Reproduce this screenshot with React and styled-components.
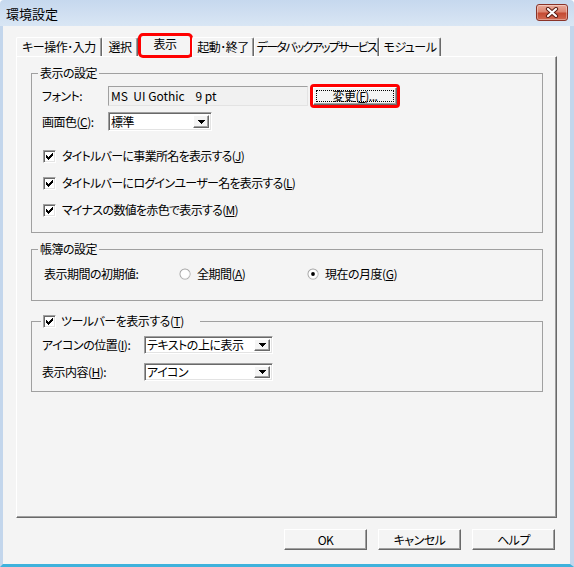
import React from "react";
import styled, { createGlobalStyle, css } from "styled-components";

const FONT = `"Noto Sans CJK JP", "Noto Sans", sans-serif`;
const FACE = "#f4f4f4";

const GlobalStyle = createGlobalStyle`
  html, body { margin: 0; padding: 0; background: #ffffff; }
  body { font-family: ${FONT}; font-size: 12px; color: #000; }
  * { box-sizing: border-box; }
`;

const Window = styled.div`
  width: 574px;
  height: 567px;
  display: flex;
  flex-direction: column;
  font-feature-settings: "palt";
  letter-spacing: -0.5px;
  line-height: 1;
`;

const TitleBar = styled.div`
  height: 26px;
  flex: none;
  display: flex;
  align-items: center;
  justify-content: space-between;
  padding: 0 6px;
  background: linear-gradient(to bottom, #c6d8ee, #d9e6f4);
  border-radius: 4px 4px 0 0;
`;

const Title = styled.div`
  font-size: 13px;
  letter-spacing: 0;
  color: #000;
`;

const CloseButton = styled.div`
  width: 32px;
  height: 17px;
  margin-top: -1px;
  border-radius: 3px;
  border: 1px solid #8a3328;
  background: linear-gradient(to bottom, #e9ab9c 0%, #dc8672 45%, #c44a33 55%, #d26a52 100%);
  box-shadow: inset 0 0 0 1px rgba(255, 255, 255, 0.35);
  display: flex;
  align-items: center;
  justify-content: center;
`;

const Client = styled.div`
  flex: 1;
  display: flex;
  flex-direction: column;
  background: ${FACE};
  border-left: 3px solid #c3d6ec;
  border-right: 4px solid #c3d6ec;
  border-bottom: 3px solid #3fb2dc;
  padding: 8px 13px 0 13px;
`;

const TabStrip = styled.div`
  display: flex;
  align-items: flex-end;
  height: 23px;
  margin-bottom: -1px;
  position: relative;
  z-index: 1;
`;

const Tab = styled.div`
  width: ${(p) => p.$w}px;
  height: ${(p) => (p.$active ? 23 : 19)}px;
  margin-bottom: ${(p) => (p.$active ? 0 : 1)}px;
  padding-bottom: ${(p) => (p.$active ? 4 : 0)}px;
  display: flex;
  align-items: center;
  justify-content: center;
  white-space: nowrap;
  letter-spacing: ${(p) => p.$ls ?? -0.5}px;
  background: ${FACE};
  border-top: 1px solid #ffffff;
  border-left: 1px solid #ffffff;
  border-right: 1px solid #696969;
  box-shadow: inset -1px 0 #a0a0a0;
  border-radius: 2px 2px 0 0;
  position: relative;
  ${(p) =>
    p.$active &&
    css`
      &::after {
        content: "";
        position: absolute;
        left: -1px;
        right: -2px;
        top: -2px;
        bottom: -1px;
        border: 3px solid #ff0000;
        border-radius: 5px;
      }
    `}
`;

const Panel = styled.div`
  width: 541px;
  height: 462px;
  flex: none;
  background: ${FACE};
  border-top: 1px solid #ffffff;
  border-left: 1px solid #ffffff;
  border-right: 1px solid #696969;
  border-bottom: 1px solid #696969;
  box-shadow: inset -1px -1px #a0a0a0;
  padding: 9px 0 0 14px;
  display: flex;
  flex-direction: column;
`;

const Group = styled.fieldset`
  width: 512px;
  min-width: 0;
  margin: ${(p) => p.$mt || 0}px 0 0 0;
  padding: ${(p) => p.$pt}px 10px ${(p) => p.$pb}px 10px;
  border: 1px solid #a0a0a0;
`;

const Legend = styled.legend`
  height: 14px;
  line-height: 14px;
  padding: 0 ${(p) => p.$pr || 2}px 0 2px;
  margin-left: ${(p) => p.$ml}px;
  display: flex;
  align-items: center;
  gap: 5px;
  white-space: nowrap;
`;

const Body = styled.div`
  display: flex;
  flex-direction: column;
`;

const Row = styled.div`
  display: flex;
  align-items: center;
  height: ${(p) => p.$h}px;
  margin-top: ${(p) => p.$mt || 0}px;
  margin-left: ${(p) => p.$ml || 0}px;
  white-space: nowrap;
`;

const Label = styled.div`
  width: ${(p) => p.$w}px;
  flex: none;
  white-space: nowrap;
`;

const ReadonlyField = styled.div`
  width: 200px;
  height: 20px;
  flex: none;
  background: #f1f1f1;
  border: 1px solid;
  border-color: #a0a0a0 #e3e3e3 #e3e3e3 #a0a0a0;
  padding-left: 2px;
  display: flex;
  align-items: center;
  white-space: pre;
  letter-spacing: 0;
`;

const Highlight = styled.div`
  margin-left: 2px;
  border: 3px solid #ff0000;
  border-radius: 4px;
  display: flex;
`;

const PushButton = styled.div`
  width: ${(p) => p.$w}px;
  height: ${(p) => p.$h}px;
  flex: none;
  display: flex;
  align-items: center;
  justify-content: center;
  background: ${FACE};
  border-top: 1px solid #ffffff;
  border-left: 1px solid #ffffff;
  border-right: 1px solid #696969;
  border-bottom: 1px solid #696969;
  box-shadow: inset -1px -1px #a0a0a0;
  padding: ${(p) => (p.$focus ? "2px" : "0")};
`;

const FocusRect = styled.div`
  flex: 1;
  align-self: stretch;
  border: 1px dotted #000;
  display: flex;
  align-items: center;
  justify-content: center;
`;

const Combo = styled.div`
  width: ${(p) => p.$w}px;
  height: ${(p) => p.$h}px;
  flex: none;
  background: #ffffff;
  border: 1px solid;
  border-color: #a0a0a0 #ffffff #ffffff #a0a0a0;
  box-shadow: inset 1px 1px #696969, inset -1px -1px #e3e3e3;
  padding: 2px;
  display: flex;
`;

const ComboText = styled.div`
  flex: 1;
  display: flex;
  align-items: center;
  white-space: nowrap;
`;

const ComboArrow = styled.div`
  width: 16px;
  flex: none;
  background: ${FACE};
  border-top: 1px solid #ffffff;
  border-left: 1px solid #ffffff;
  border-right: 1px solid #696969;
  border-bottom: 1px solid #696969;
  box-shadow: inset -1px -1px #a0a0a0;
  display: flex;
  align-items: center;
  justify-content: center;
`;

const CheckBox = styled.span`
  width: 13px;
  height: 13px;
  flex: none;
  background: #ffffff;
  border: 1px solid;
  border-color: #a0a0a0 #ffffff #ffffff #a0a0a0;
  box-shadow: inset 1px 1px #696969, inset -1px -1px #e3e3e3;
  display: inline-flex;
  align-items: center;
  justify-content: center;
  margin-left: ${(p) => p.$ml || 0}px;
`;

const CheckLabel = styled.span`
  margin-left: ${(p) => p.$gap || 6}px;
  letter-spacing: -0.7px;
`;

const RadioOption = styled.div`
  width: ${(p) => p.$w || "auto"};
  flex: none;
  display: flex;
  align-items: center;
  gap: 6px;
`;

const ButtonRow = styled.div`
  display: flex;
  justify-content: flex-end;
  gap: 11px;
  margin-top: 11px;
  padding-right: 2px;
`;

const U = styled.span`
  text-decoration: underline;
  text-underline-offset: 1px;
`;

const CloseIcon = () => (
  <svg width="14" height="11" viewBox="0 0 14 11">
    <path d="M3 2 L11 9 M11 2 L3 9" stroke="#5b1d14" strokeWidth="4.2" strokeLinecap="round" />
    <path d="M3 2 L11 9 M11 2 L3 9" stroke="#ffffff" strokeWidth="2.2" strokeLinecap="round" />
  </svg>
);

const DownArrow = () => (
  <svg width="7" height="4" viewBox="0 0 7 4" shapeRendering="crispEdges">
    <path d="M0 0 H7 V1 H6 V2 H5 V3 H4 V4 H3 V3 H2 V2 H1 V1 H0 Z" fill="#000" />
  </svg>
);

const CheckMark = () => (
  <svg width="7" height="7" viewBox="0 0 7 7" shapeRendering="crispEdges">
    <path
      d="M0 2h1v3h-1z M1 3h1v3h-1z M2 4h1v3h-1z M3 3h1v3h-1z M4 2h1v3h-1z M5 1h1v3h-1z M6 0h1v3h-1z"
      fill="#000"
    />
  </svg>
);

const Check = ({ ml }) => (
  <CheckBox $ml={ml}>
    <CheckMark />
  </CheckBox>
);

const Radio = ({ on }) => (
  <svg width="12" height="12" viewBox="0 0 12 12">
    <circle cx="6" cy="6" r="5.5" fill="#a0a0a0" />
    <circle cx="6" cy="6" r="4.6" fill="#ffffff" />
    <path d="M2.2 8.6 A4.6 4.6 0 0 0 9.8 3.4" stroke="#e8e8e8" strokeWidth="0.8" fill="none" />
    {on && <circle cx="6" cy="6" r="1.9" fill="#000" />}
  </svg>
);

const tabs = [
  { label: "キー操作･入力", w: 86 },
  { label: "選択", w: 36 },
  { label: "表示", w: 54, active: true },
  { label: "起動･終了", w: 62 },
  { label: "データバックアップサービス", w: 125, ls: -1.7 },
  { label: "モジュール", w: 62 },
];

export default function App() {
  return (
    <>
      <GlobalStyle />
      <Window>
        <TitleBar>
          <Title>環境設定</Title>
          <CloseButton>
            <CloseIcon />
          </CloseButton>
        </TitleBar>
        <Client>
          <TabStrip>
            {tabs.map((t) => (
              <Tab key={t.label} $w={t.w} $ls={t.ls} $active={t.active}>
                {t.label}
              </Tab>
            ))}
          </TabStrip>
          <Panel>
            <Group $pt={6} $pb={14}>
              <Legend $ml={-4}>表示の設定</Legend>
              <Body>
                <Row $h={20}>
                  <Label $w={66}>フォント:</Label>
                  <ReadonlyField>{"MS  UI Gothic    9 pt"}</ReadonlyField>
                  <Highlight>
                    <PushButton $w={84} $h={18} $focus>
                      <FocusRect>
                        変更(<U>F</U>)...
                      </FocusRect>
                    </PushButton>
                  </Highlight>
                </Row>
                <Row $h={19} $mt={6}>
                  <Label $w={66}>
                    画面色(<U>C</U>):
                  </Label>
                  <Combo $w={104} $h={19}>
                    <ComboText>標準</ComboText>
                    <ComboArrow>
                      <DownArrow />
                    </ComboArrow>
                  </Combo>
                </Row>
                <Row $h={16} $mt={17}>
                  <Check ml={1} />
                  <CheckLabel>
                    タイトルバーに事業所名を表示する(<U>J</U>)
                  </CheckLabel>
                </Row>
                <Row $h={16} $mt={11}>
                  <Check ml={1} />
                  <CheckLabel>
                    タイトルバーにログインユーザー名を表示する(<U>L</U>)
                  </CheckLabel>
                </Row>
                <Row $h={16} $mt={11}>
                  <Check ml={1} />
                  <CheckLabel>
                    マイナスの数値を赤色で表示する(<U>M</U>)
                  </CheckLabel>
                </Row>
              </Body>
            </Group>

            <Group $mt={9} $pt={10} $pb={18}>
              <Legend $ml={-4}>帳簿の設定</Legend>
              <Body>
                <Row $h={16} $ml={2}>
                  <Label $w={135}>表示期間の初期値:</Label>
                  <RadioOption $w="128px">
                    <Radio />
                    <span>
                      全期間(<U>A</U>)
                    </span>
                  </RadioOption>
                  <RadioOption>
                    <Radio on />
                    <span>
                      現在の月度(<U>G</U>)
                    </span>
                  </RadioOption>
                </Row>
              </Body>
            </Group>

            <Group $mt={13} $pt={8} $pb={10}>
              <Legend $ml={-1} $pr={16}>
                <Check />
                <span>
                  ツールバーを表示する(<U>T</U>)
                </span>
              </Legend>
              <Body>
                <Row $h={18}>
                  <Label $w={102}>
                    アイコンの位置(<U>I</U>):
                  </Label>
                  <Combo $w={129} $h={18}>
                    <ComboText>テキストの上に表示</ComboText>
                    <ComboArrow>
                      <DownArrow />
                    </ComboArrow>
                  </Combo>
                </Row>
                <Row $h={18} $mt={9}>
                  <Label $w={102}>
                    表示内容(<U>H</U>):
                  </Label>
                  <Combo $w={129} $h={18}>
                    <ComboText>アイコン</ComboText>
                    <ComboArrow>
                      <DownArrow />
                    </ComboArrow>
                  </Combo>
                </Row>
              </Body>
            </Group>
          </Panel>
          <ButtonRow>
            <PushButton $w={83} $h={21}>OK</PushButton>
            <PushButton $w={83} $h={21}>キャンセル</PushButton>
            <PushButton $w={83} $h={21}>ヘルプ</PushButton>
          </ButtonRow>
        </Client>
      </Window>
    </>
  );
}
